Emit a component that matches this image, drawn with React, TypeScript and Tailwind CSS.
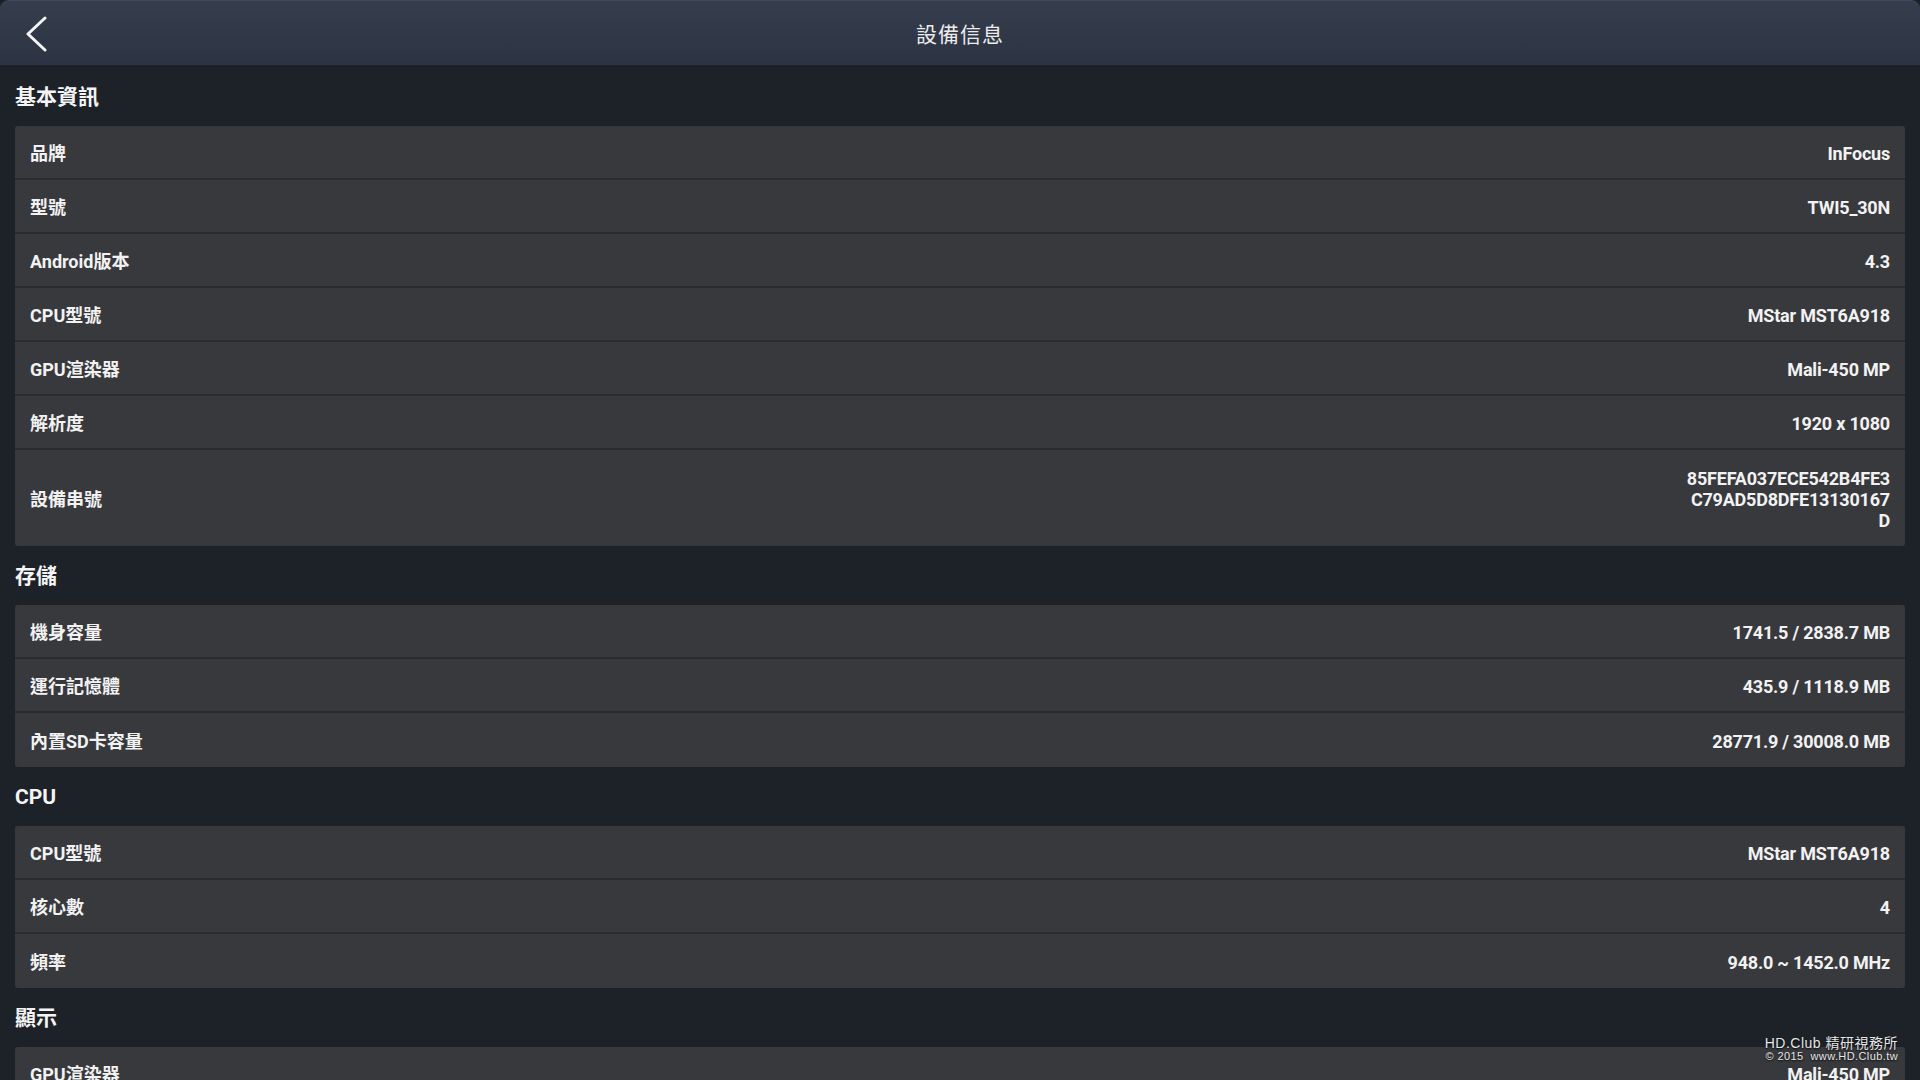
import React from "react";

type Row = { label: string; value: React.ReactNode; tall?: boolean };

const sections: { title: string; rows: Row[] }[] = [
  {
    title: "基本資訊",
    rows: [
      { label: "品牌", value: "InFocus" },
      { label: "型號", value: "TWI5_30N" },
      { label: "Android版本", value: "4.3" },
      { label: "CPU型號", value: "MStar MST6A918" },
      { label: "GPU渲染器", value: "Mali-450 MP" },
      { label: "解析度", value: "1920 x 1080" },
      {
        label: "設備串號",
        value: (
          <>
            85FEFA037ECE542B4FE3
            <br />
            C79AD5D8DFE13130167
            <br />D
          </>
        ),
        tall: true,
      },
    ],
  },
  {
    title: "存儲",
    rows: [
      { label: "機身容量", value: "1741.5 / 2838.7 MB" },
      { label: "運行記憶體", value: "435.9 / 1118.9 MB" },
      { label: "內置SD卡容量", value: "28771.9 / 30008.0 MB" },
    ],
  },
  {
    title: "CPU",
    rows: [
      { label: "CPU型號", value: "MStar MST6A918" },
      { label: "核心數", value: "4" },
      { label: "頻率", value: "948.0 ~ 1452.0 MHz" },
    ],
  },
  {
    title: "顯示",
    rows: [
      { label: "GPU渲染器", value: "Mali-450 MP" },
      { label: "OpenGL版本", value: "OpenGL ES 2.0" },
    ],
  },
];

export default function App() {
  return (
    <div
      className="relative h-screen w-full overflow-hidden bg-[#1d2229] text-[#f2f2f2]"
      style={{ fontFamily: 'Roboto, "Noto Sans CJK TC", "Noto Sans", sans-serif' }}
    >
      <header className="grid h-[65px] grid-cols-[1fr_auto_1fr] items-center rounded-t-[9px] border-t border-[#414a5a] bg-gradient-to-b from-[#363e4e] to-[#2c3343]">
        <div className="flex items-center pl-[25px]">
          <svg width="24" height="36" viewBox="0 0 24 36" className="mt-[1px]">
            <polyline
              points="20,2 3,18 20,34"
              fill="none"
              stroke="#f5f5f5"
              strokeWidth="3"
              strokeLinecap="round"
              strokeLinejoin="round"
            />
          </svg>
        </div>
        <div className="pt-[5px] text-[21px] tracking-[1px] text-[#ececec]">設備信息</div>
        <div />
      </header>

      <main className="px-[15px]">
        {sections.map((s, si) => (
          <section key={si}>
            <div className={`flex items-center text-[21px] font-bold text-[#f4f4f4] ${si === 0 ? "h-[61px] pt-[4px]" : "h-[59px] pt-[3px]"}`}>
              {s.title}
            </div>
            <div className="overflow-hidden rounded-[3px] bg-[#38393d]">
              {s.rows.map((r, ri) => (
                <div
                  key={ri}
                  className={`flex items-center justify-between px-[15px] pt-[2px] text-[18px] font-bold ${r.tall ? "h-[96px]" : "h-[54px]"} ${ri < s.rows.length - 1 ? "border-b-2 border-[#2b2c30]" : ""}`}
                >
                  <span>{r.label}</span>
                  <span className="text-right leading-[21px] tracking-[-0.2px]">{r.value}</span>
                </div>
              ))}
            </div>
          </section>
        ))}
      </main>

      <div
        className="absolute bottom-[18px] right-[22px] flex flex-col items-end leading-none text-[#e6e6e6] [text-shadow:0_1px_2px_rgba(0,0,0,0.9)]"
        style={{ fontFamily: '"Liberation Sans", "Noto Sans CJK TC", sans-serif' }}
      >
        <div className="text-[14px] tracking-[0.5px]">HD.Club 精研視務所</div>
        <div className="mt-[1px] text-[11px] tracking-[0.4px] whitespace-pre">© 2015  www.HD.Club.tw</div>
      </div>
    </div>
  );
}
